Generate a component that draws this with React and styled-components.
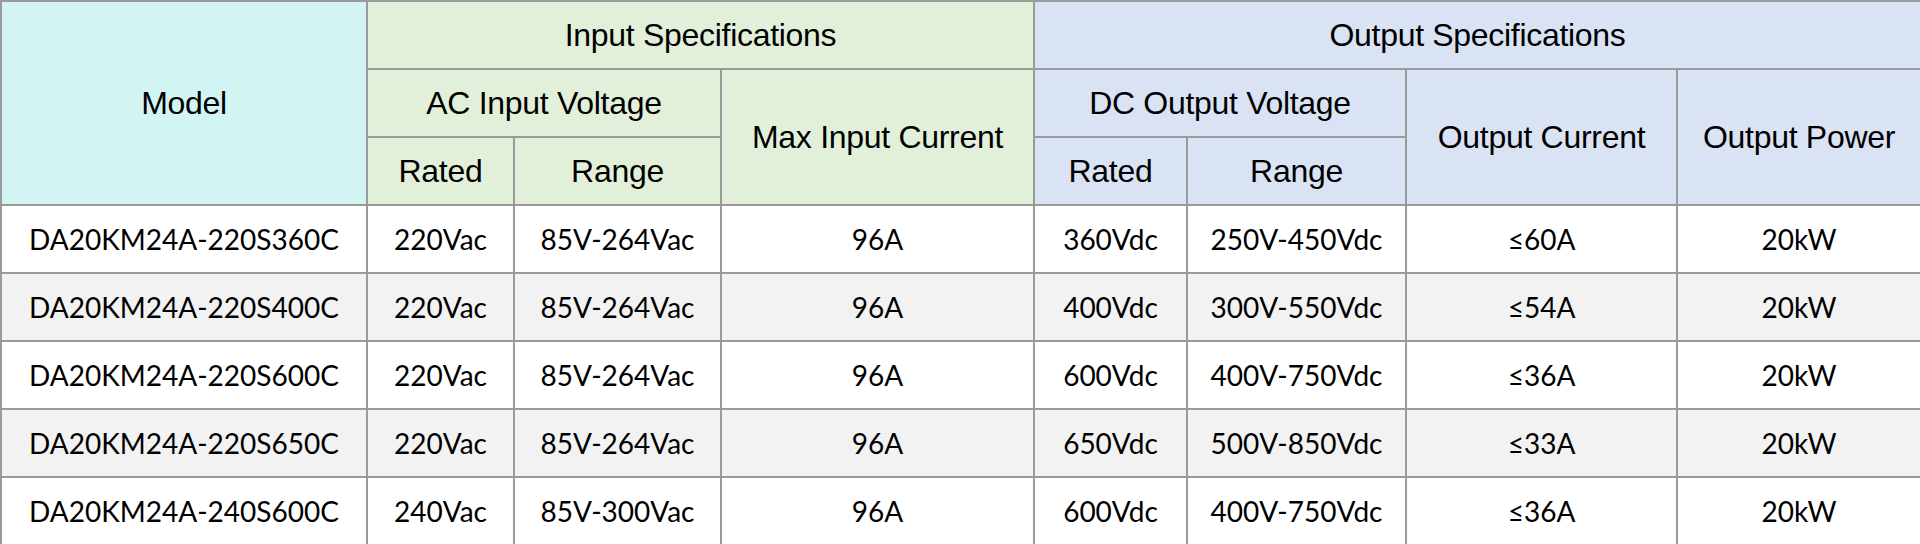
import React from 'react';
import styled, { createGlobalStyle } from 'styled-components';

const GlobalStyle = createGlobalStyle`
  html, body {
    margin: 0;
    padding: 0;
    background: #ffffff;
  }
`;

const COLS = [366, 147, 207, 313, 153, 219, 271, 244];

const ROWS = [
  ['DA20KM24A-220S360C', '220Vac', '85V-264Vac', '96A', '360Vdc', '250V-450Vdc', '≤60A', '20kW'],
  ['DA20KM24A-220S400C', '220Vac', '85V-264Vac', '96A', '400Vdc', '300V-550Vdc', '≤54A', '20kW'],
  ['DA20KM24A-220S600C', '220Vac', '85V-264Vac', '96A', '600Vdc', '400V-750Vdc', '≤36A', '20kW'],
  ['DA20KM24A-220S650C', '220Vac', '85V-264Vac', '96A', '650Vdc', '500V-850Vdc', '≤33A', '20kW'],
  ['DA20KM24A-240S600C', '240Vac', '85V-300Vac', '96A', '600Vdc', '400V-750Vdc', '≤36A', '20kW'],
];

const TONES = {
  model: '#d2f4f2',
  input: '#e2f0da',
  output: '#dae3f4',
};

const SpecTable = styled.table`
  width: 1920px;
  height: 544px;
  table-layout: fixed;
  border-collapse: collapse;
  border: 2px solid #9a9a9a;
`;

const HeadRow = styled.tr`
  height: 68px;
`;

const HeadCell = styled.th`
  background: ${(p) => TONES[p.$tone]};
  border: 2px solid #9a9a9a;
  padding: 0;
  font-family: "Liberation Sans", Arial, sans-serif;
  font-weight: normal;
  font-size: 32px;
  letter-spacing: -0.3px;
  color: #000000;
  text-align: center;
  vertical-align: middle;
  white-space: nowrap;
`;

const BodyRow = styled.tr`
  height: 68px;
  background: ${(p) => (p.$striped ? '#f2f2f2' : '#ffffff')};
`;

const BodyCell = styled.td`
  border: 2px solid #9a9a9a;
  padding: 0;
  font-family: Lato, "Open Sans", sans-serif;
  font-size: 28px;
  color: #000000;
  text-align: center;
  vertical-align: middle;
  white-space: nowrap;
`;

export default function App() {
  return (
    <>
      <GlobalStyle />
      <SpecTable>
        <colgroup>
          {COLS.map((w, i) => (
            <col key={i} style={{ width: w }} />
          ))}
        </colgroup>
        <thead>
          <HeadRow>
            <HeadCell $tone="model" rowSpan={3}>Model</HeadCell>
            <HeadCell $tone="input" colSpan={3}>Input Specifications</HeadCell>
            <HeadCell $tone="output" colSpan={4}>Output Specifications</HeadCell>
          </HeadRow>
          <HeadRow>
            <HeadCell $tone="input" colSpan={2}>AC Input Voltage</HeadCell>
            <HeadCell $tone="input" rowSpan={2}>Max Input Current</HeadCell>
            <HeadCell $tone="output" colSpan={2}>DC Output Voltage</HeadCell>
            <HeadCell $tone="output" rowSpan={2}>Output Current</HeadCell>
            <HeadCell $tone="output" rowSpan={2}>Output Power</HeadCell>
          </HeadRow>
          <HeadRow>
            <HeadCell $tone="input">Rated</HeadCell>
            <HeadCell $tone="input">Range</HeadCell>
            <HeadCell $tone="output">Rated</HeadCell>
            <HeadCell $tone="output">Range</HeadCell>
          </HeadRow>
        </thead>
        <tbody>
          {ROWS.map((row, r) => (
            <BodyRow key={row[0]} $striped={r % 2 === 1}>
              {row.map((v, c) => (
                <BodyCell key={c}>{v}</BodyCell>
              ))}
            </BodyRow>
          ))}
        </tbody>
      </SpecTable>
    </>
  );
}
